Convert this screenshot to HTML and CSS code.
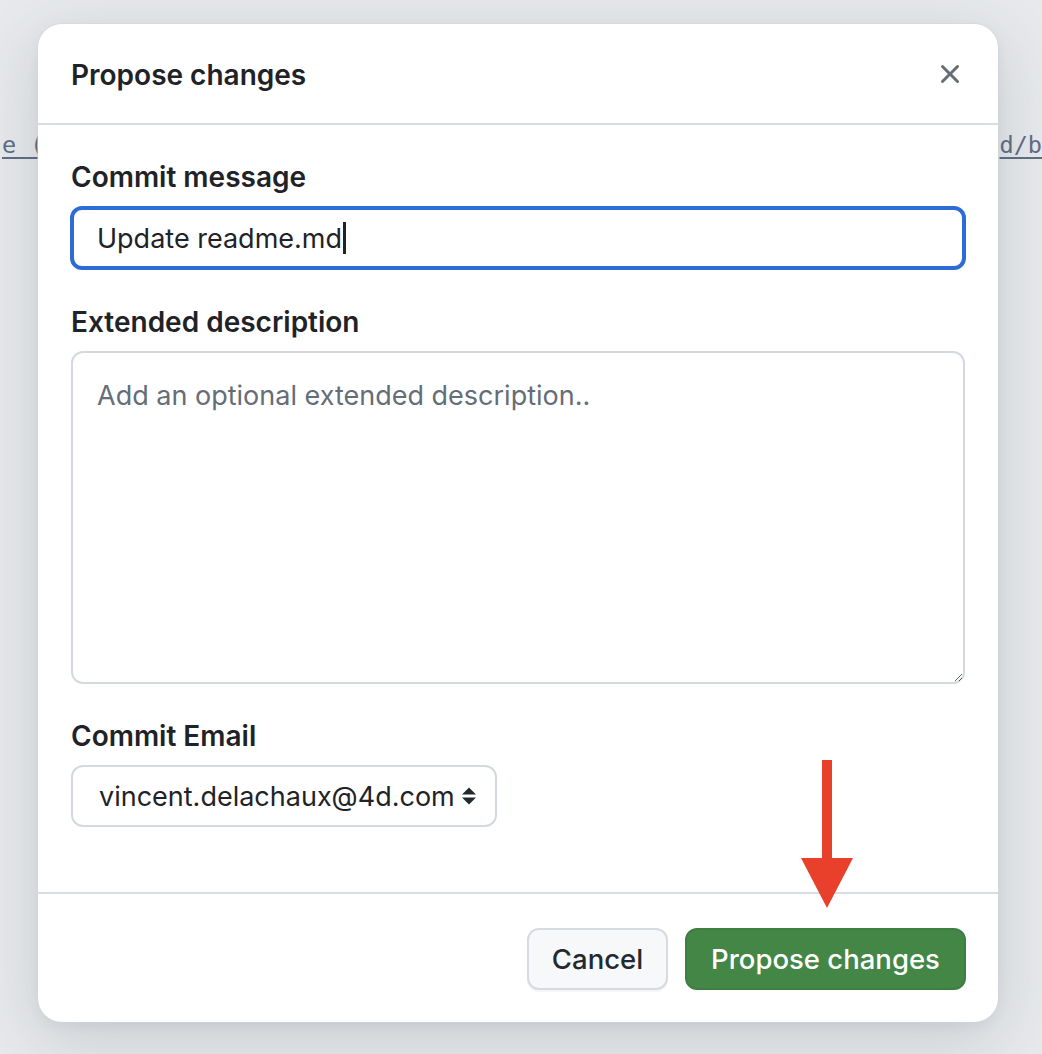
FILE: index.html
```html
<!DOCTYPE html>
<html lang="en">
<head>
<meta charset="utf-8">
<title>Propose changes</title>
<link rel="stylesheet" href="styles.css">
</head>
<body>
<div class="page">
  <div class="page-line">
    <span class="code-link left">e (</span>
    <span class="code-link right">d/b</span>
  </div>
</div>

<div class="dialog">
  <div class="dialog-header">
    <h1 class="dialog-title">Propose changes</h1>
    <button class="close-btn" aria-label="Close">
      <svg width="32" height="32" viewBox="0 0 16 16"><path fill="#656d76" d="M3.72 3.72a.75.75 0 0 1 1.06 0L8 6.94l3.22-3.220a.749.749 0 0 1 1.275.326.749.749 0 0 1-.215.734L9.06 8l3.22 3.22a.749.749 0 0 1-.326 1.275.749.749 0 0 1-.734-.215L8 9.06l-3.22 3.22a.751.751 0 0 1-1.042-.018.751.751 0 0 1-.018-1.042L6.94 8 3.720 4.78a.75.75 0 0 1 0-1.06Z"/></svg>
    </button>
  </div>
  <div class="dialog-body">
    <div class="field">
      <label class="field-label">Commit message</label>
      <div class="text-input focused"><span>Update readme.md</span><span class="caret"></span></div>
    </div>
    <div class="field">
      <label class="field-label">Extended description</label>
      <textarea class="textarea" placeholder="Add an optional extended description.."></textarea>
    </div>
    <div class="field">
      <label class="field-label">Commit Email</label>
      <div class="select">
        <span class="select-value">vincent.delachaux@4d.com</span>
        <svg class="select-arrows" width="16" height="18" viewBox="0 0 16 18"><path fill="#24292f" d="M8 0.5 L15 7.5 H1 Z M8 17.5 L15 10.5 H1 Z"/></svg>
      </div>
    </div>
  </div>
  <div class="dialog-footer">
    <button class="btn btn-default">Cancel</button>
    <button class="btn btn-primary">Propose changes</button>
  </div>
</div>

<svg class="annotation-arrow" width="52" height="150" viewBox="0 0 52 150">
  <rect x="21" y="0" width="10" height="100" fill="#e8402a"/>
  <polygon points="0,98 52,98 26,148" fill="#e8402a"/>
</svg>
</body>
</html>
```

FILE: styles.css
```css
* { box-sizing: border-box; }

html, body {
  margin: 0;
  padding: 0;
}

body {
  width: 1042px;
  height: 1054px;
  background: #e7e9ec;
  font-family: Inter, "Noto Sans", "Liberation Sans", sans-serif;
  color: #1f2328;
  overflow: hidden;
  position: relative;
}

.page {
  padding-top: 128px;
}

.page-line {
  display: flex;
  justify-content: space-between;
  font-family: "DejaVu Sans Mono", "Liberation Mono", monospace;
  font-size: 23.5px;
  line-height: 34px;
}

.code-link {
  color: #5f6d86;
  text-decoration: underline;
  text-underline-offset: 4px;
  white-space: pre;
}

.left { margin-left: 2px; }
.right { margin-right: 0; }

.dialog {
  position: absolute;
  left: 38px;
  top: 24px;
  width: 960px;
  height: 998px;
  background: #fff;
  border-radius: 24px;
  box-shadow: 0 0 0 1px rgba(208, 215, 222, 0.5), 0 16px 64px rgba(60, 70, 80, 0.18), 0 4px 12px rgba(60, 70, 80, 0.06);
  display: flex;
  flex-direction: column;
}

.dialog-header {
  height: 101px;
  border-bottom: 2px solid #d8dde2;
  display: flex;
  align-items: center;
  justify-content: space-between;
  padding: 3px 32px 0 33px;
}

.dialog-title {
  margin: 0;
  font-size: 28px;
  font-weight: 600;
  line-height: 40px;
}

.close-btn {
  border: 0;
  background: none;
  padding: 0;
  width: 32px;
  height: 32px;
  margin-top: -3px;
  display: flex;
}

.dialog-body {
  padding: 32px 32px 64px 32px;
  display: flex;
  flex-direction: column;
  gap: 32px;
}

.field {
  display: flex;
  flex-direction: column;
  gap: 9px;
}

.field-label {
  font-size: 28px;
  font-weight: 600;
  line-height: 40px;
  padding-left: 1px;
}

.text-input {
  height: 64px;
  border: 4px solid #2d6cd5;
  border-radius: 12px;
  display: flex;
  align-items: center;
  padding: 0 23px;
  font-size: 27px;
  color: #1f2328;
}

.caret {
  display: inline-block;
  width: 3px;
  height: 32px;
  background: #1f2328;
  margin-left: 1px;
}

.textarea {
  margin: 0 1px;
  height: 333px;
  border: 2px solid #d3d9df;
  border-radius: 12px;
  padding: 23px 24px;
  font-family: inherit;
  font-size: 27px;
  line-height: 40px;
  resize: vertical;
  outline: none;
  color: #1f2328;
}

.textarea::placeholder {
  color: #656d76;
}

.select {
  align-self: flex-start;
  margin-left: 1px;
  width: 426px;
  height: 62px;
  border: 2px solid #d3d9df;
  border-radius: 12px;
  display: flex;
  align-items: center;
  justify-content: space-between;
  padding: 0 18px 0 26px;
  font-size: 27px;
  color: #1f2328;
}

.select-value {
  white-space: nowrap;
}

.select-arrows {
  flex-shrink: 0;
}

.dialog-footer {
  border-top: 2px solid #d8dde2;
  padding: 34px 32px 32px;
  display: flex;
  justify-content: flex-end;
  gap: 17px;
  margin-top: auto;
}

.btn {
  height: 62px;
  border-radius: 12px;
  font-family: inherit;
  font-size: 27.5px;
  font-weight: 500;
  padding: 0 20px;
  display: flex;
  align-items: center;
  white-space: nowrap;
}

.btn-default {
  width: 141px;
  justify-content: center;
  background: #f6f8fa;
  border: 2px solid #d5dbe1;
  color: #24292f;
  box-shadow: 0 2px 0 rgba(31, 35, 40, 0.04);
}

.btn-primary {
  width: 281px;
  justify-content: center;
  background: #438646;
  border: 2px solid #3e7f41;
  color: #fff;
}

.annotation-arrow {
  position: absolute;
  left: 801px;
  top: 760px;
}
```
